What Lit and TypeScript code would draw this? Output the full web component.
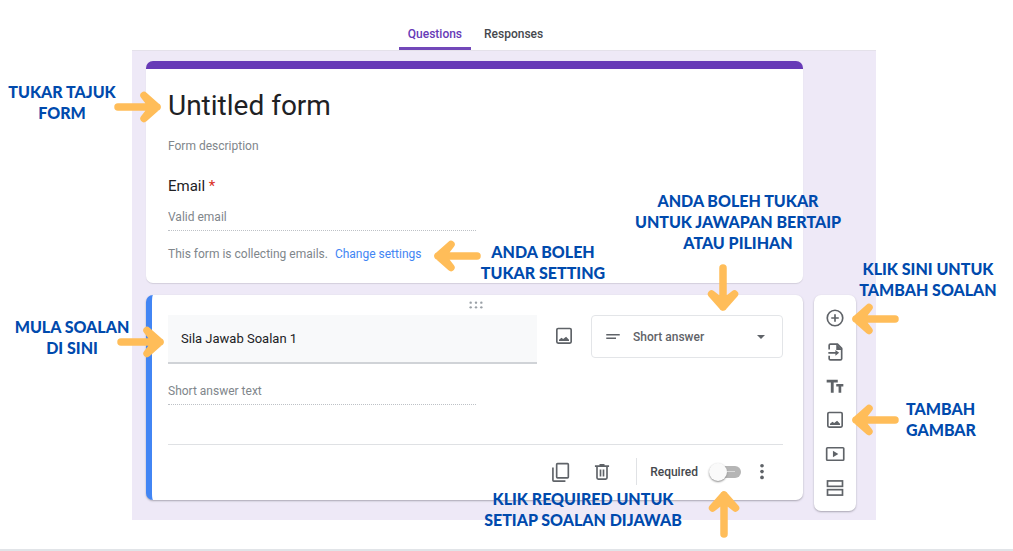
import { LitElement, html, css, svg } from "lit";
import { customElement, property, state } from "lit/decorators.js";
import { classMap } from "lit/directives/class-map.js";

const icons: Record<string, unknown> = {
  add: svg`<circle cx="12" cy="12" r="9.300"/><path d="M12 7.500v9M7.500 12h9"/>`,
  importing: svg`<path d="M5 9V4a1.500 1.500 0 0 1 1.500-1.500H15l5 5V20a1.500 1.500 0 0 1-1.500 1.500h-12A1.500 1.500 0 0 1 5 20v-3.500M4 13h9.500"/><path class="solid" d="M13.500 2l7.500 7.500h-7.500zM12.500 9.500L17 13l-4.500 3.500z"/>`,
  text: svg`<path class="solid" d="M2 4.500v3.200h5V20h3.400V7.700h4.900V4.500zM22 9.500h-8.500v3h2.800V20h3.200v-7.500H22z"/>`,
  image: svg`<rect x="3.400" y="3" width="17.200" height="17.500" rx="1.500"/><path class="solid" d="M6 18v-1.500l3-2.500 2 1.500 3.500-2.500 3.500 3.500V18z"/>`,
  video: svg`<rect x="2" y="4.500" width="20.500" height="15" rx="1"/><path class="solid" d="M9.500 8v8l6.500-4z"/>`,
  section: svg`<rect x="3" y="3.500" width="18" height="6.500"/><rect x="3" y="14" width="18" height="6.500"/>`,
  copy: svg`<rect x="8" y="2" width="14" height="17" rx="1"/><path d="M3.500 6.500V22a1 1 0 0 0 1 1h14"/>`,
  trash: svg`<path d="M3.500 5h17M9 3.500h6M6 5v14a1.500 1.500 0 0 0 1.500 1.500h9a1.500 1.500 0 0 0 1.500-1.500V5M10.200 9v8.500M13.800 9v8.500"/>`,
  more: svg`<circle class="solid" cx="12" cy="4.500" r="2.200"/><circle class="solid" cx="12" cy="11.500" r="2.200"/><circle class="solid" cx="12" cy="18.500" r="2.200"/>`,
  short: svg`<path d="M3 9h18M3 13.500h13"/>`,
  drag: svg`<g class="solid"><circle cx="4" cy="8.500" r="1.800"/><circle cx="12" cy="8.500" r="1.800"/><circle cx="20" cy="8.500" r="1.800"/><circle cx="4" cy="15.500" r="1.800"/><circle cx="12" cy="15.500" r="1.800"/><circle cx="20" cy="15.500" r="1.800"/></g>`,
};

@customElement("form-icon")
class FormIcon extends LitElement {
  @property() name = "";
  static styles = css`
    :host { display: block; width: 20px; height: 20px; color: #5f6368; }
    .glyph { display: block; width: 100%; height: 100%; fill: none; stroke: currentColor; stroke-width: 2; overflow: visible; }
    .solid { fill: currentColor; stroke: none; }
  `;
  render() {
    return html`<svg class="glyph" viewBox="0 0 24 24" aria-hidden="true">${icons[this.name]}</svg>`;
  }
}

@customElement("guide-arrow")
class GuideArrow extends LitElement {
  @property({ reflect: true }) dir = "right";
  static styles = css`
    :host { display: block; width: 48px; height: 32px; }
    :host([dir="up"]), :host([dir="down"]) { width: 32px; height: 48px; }
    .arrow { display: block; width: 100%; height: 100%; fill: #ffbd59; stroke: #ffbd59; stroke-width: 7.5; stroke-linecap: round; stroke-linejoin: round; }
  `;
  render() {
    const shapes: Record<string, [string, string]> = {
      right: ["0 0 48 32", "M4 16H43M30 4.500L43 16L30 27.500L39 16z"],
      left: ["0 0 48 32", "M44 16H5M18 4.500L5 16L18 27.500L9 16z"],
      down: ["0 0 32 48", "M16 4V43M4.500 30L16 43L27.500 30L16 39z"],
      up: ["0 0 32 48", "M16 44V5M4.500 18L16 5L27.500 18L16 9z"],
    };
    const [box, path] = shapes[this.dir];
    return html`<svg class="arrow" viewBox=${box} aria-hidden="true"><path d=${path}></path></svg>`;
  }
}

@customElement("app-root")
class AppRoot extends LitElement {
  @state() tab = "Questions";

  static styles = css`
    :host { display: block; font-family: Roboto, "Liberation Sans", sans-serif; font-size: 12px; color: #202124; background: #fff; }
    * { box-sizing: border-box; }
    button, input, select { font: inherit; color: inherit; border: 0; margin: 0; padding: 0; background: none; outline: none; border-radius: 0; }
    .guide { position: relative; padding: 0 137px 29px 132px; border-bottom: 2px solid #e1e4e8; }
    .tabs { display: flex; justify-content: center; gap: 4px; height: 51px; padding-right: 57px; border-bottom: 1px solid #e4e1ea; }
    .tab { display: flex; align-items: center; height: 50px; padding: 21px 9px 0; border-bottom: 3px solid transparent; font-weight: 500; color: #45484d; }
    .tab.active { color: #673ab7; border-bottom-color: #7248b9; border-radius: 2px 2px 0 0; }
    .canvas { display: grid; grid-template-columns: 1fr 42px; column-gap: 11px; row-gap: 12px; align-items: start; padding: 10px 20px 9px 14px; background: #eee9f7; }
    .card { background: #fff; border-radius: 7px; box-shadow: 0 1px 1px #d3cfdc; overflow: hidden; }
    .intro { display: flex; flex-direction: column; align-items: flex-start; border-top: 8px solid #673ab7; padding: 18px 20px 19px 22px; }
    .title { width: 100%; height: 36px; font-size: 28px; }
    .description { width: 100%; height: 20px; margin-top: 13px; }
    .muted, .muted::placeholder { color: #80868b; opacity: 1; }
    .label { margin-top: 20px; font-size: 15px; line-height: 20px; }
    .star { color: #d93025; }
    .line { width: 50%; height: 24px; padding-bottom: 3px; border-bottom: 1px dotted #bdc1c6; }
    .email { margin-top: 11px; }
    .info { margin: 13px 0 0; line-height: 20px; color: #80868b; }
    .link { color: #4285f4; text-decoration: none; margin-left: 4px; }
    .question { grid-column: 1; border-left: 6px solid #4285f4; padding: 0 20px 0 16px; box-shadow: 0 1px 2px #a9a6b2; }
    .drag { display: flex; justify-content: center; align-items: center; height: 20px; }
    .drag form-icon { width: 16px; height: 16px; color: #9aa0a6; }
    .row { display: flex; align-items: flex-start; }
    .prompt { flex: 1; min-width: 0; height: 49px; padding: 0 13px; background: #f8f9fa; border-bottom: 2px solid #d0d3d7; font-size: 13px; }
    .icon-button { display: grid; place-items: center; width: 42px; height: 34px; cursor: pointer; }
    .row .icon-button { width: 54px; height: 42px; }
    .kind { position: relative; display: flex; align-items: center; width: 192px; height: 43px; border: 1px solid #e3e5e8; border-radius: 4px; }
    .kind form-icon { position: absolute; left: 12px; width: 18px; height: 18px; pointer-events: none; }
    .kind::after { content: ""; position: absolute; right: 17px; border: 4px solid transparent; border-top-color: #5f6368; border-bottom: 0; pointer-events: none; }
    .select { appearance: none; width: 100%; height: 41px; padding-left: 41px; font-weight: 500; color: #5f6368; }
    .answer { margin-top: 17px; display: block; }
    .actions { display: flex; justify-content: flex-end; align-items: center; height: 56px; margin-top: 39px; padding-bottom: 2px; border-top: 1px solid #dfe1e4; }
    .required { display: flex; align-items: center; gap: 11px; height: 27px; margin-left: 13px; padding-left: 13px; border-left: 1px solid #e0e2e5; color: #45484d; font-weight: 500; }
    .toggle { appearance: none; display: flex; align-items: center; width: 32px; height: 12px; border-radius: 6px; background: #b5b5b5; }
    .toggle::before { content: ""; width: 18px; height: 18px; flex: none; border-radius: 50%; background: #fafafa; box-shadow: 0 1px 2px #8a8a8a; }
    .toggle::after { content: ""; width: 8px; height: 1px; background: #dadada; }
    .toggle:checked { flex-direction: row-reverse; background: #b39ddb; }
    .toolbar { display: flex; flex-direction: column; padding: 6px 0; background: #fff; border-radius: 7px; box-shadow: 0 1px 2px #a9a6b2; }
    .note { position: absolute; margin: 0; color: #004aad; font: 900 16px/21px Lato, "Open Sans", sans-serif; text-align: center; white-space: pre; }
    .pointer { position: absolute; pointer-events: none; }
    .n-title { top: 81px; left: 7px; width: 110px; }
    .n-start { top: 316px; left: 12px; width: 120px; }
    .n-setting { top: 241px; left: 473px; width: 140px; }
    .n-kind { top: 190px; right: 165px; width: 220px; }
    .n-required { top: 488px; right: 320px; width: 220px; }
    .n-add { top: 258px; right: 10px; width: 150px; }
    .n-image { top: 398px; right: 27px; width: 80px; text-align: left; }
    .p-title { top: 91px; left: 114px; }
    .p-start { top: 326px; left: 117px; }
    .p-setting { top: 240px; left: 433px; }
    .p-kind { top: 264px; right: 274px; }
    .p-required { top: 490px; right: 273px; }
    .p-add { top: 303px; right: 114px; }
    .p-image { top: 404px; right: 114px; }
  `;

  private iconButton(name: string, label: string) {
    return html`<button class="icon-button" type="button" aria-label=${label}><form-icon name=${name}></form-icon></button>`;
  }

  private note(key: string, text: string, dir: string) {
    return html`<p class="note n-${key}">${text}</p><guide-arrow class="pointer p-${key}" dir=${dir}></guide-arrow>`;
  }

  render() {
    return html`
      <main class="guide">
        <nav class="tabs">
          ${["Questions", "Responses"].map(
            (t) => html`<button type="button" class=${classMap({ tab: true, active: this.tab === t })} @click=${() => (this.tab = t)}>${t}</button>`
          )}
        </nav>
        <div class="canvas">
          <section class="card intro">
            <input class="title" aria-label="Form title" value="Untitled form" />
            <input class="description muted" aria-label="Form description" placeholder="Form description" />
            <label class="label" for="email">Email <span class="star">*</span></label>
            <input class="line email muted" id="email" type="email" placeholder="Valid email" />
            <p class="info">This form is collecting emails. <a class="link" href="#settings">Change settings</a></p>
          </section>
          <section class="card question">
            <div class="drag"><form-icon name="drag"></form-icon></div>
            <div class="row">
              <input class="prompt" aria-label="Question" value="Sila Jawab Soalan 1" />
              ${this.iconButton("image", "Add image to question")}
              <div class="kind">
                <form-icon name="short"></form-icon>
                <select class="select" aria-label="Question type"><option>Short answer</option></select>
              </div>
            </div>
            <input class="line answer muted" aria-label="Answer" placeholder="Short answer text" />
            <div class="actions">
              ${this.iconButton("copy", "Duplicate")}
              ${this.iconButton("trash", "Delete")}
              <label class="required">Required <input class="toggle" type="checkbox" role="switch" /></label>
              ${this.iconButton("more", "More options")}
            </div>
          </section>
          <div class="toolbar" role="toolbar" aria-label="Add to form">
            ${this.iconButton("add", "Add question")}
            ${this.iconButton("importing", "Import questions")}
            ${this.iconButton("text", "Add title and description")}
            ${this.iconButton("image", "Add image")}
            ${this.iconButton("video", "Add video")}
            ${this.iconButton("section", "Add section")}
          </div>
        </div>
        ${this.note("title", "TUKAR TAJUK\nFORM", "right")}
        ${this.note("start", "MULA SOALAN\nDI SINI", "right")}
        ${this.note("setting", "ANDA BOLEH\nTUKAR SETTING", "left")}
        ${this.note("kind", "ANDA BOLEH TUKAR\nUNTUK JAWAPAN BERTAIP\nATAU PILIHAN", "down")}
        ${this.note("add", "KLIK SINI UNTUK\nTAMBAH SOALAN", "left")}
        ${this.note("image", "TAMBAH\nGAMBAR", "left")}
        ${this.note("required", "KLIK REQUIRED UNTUK\nSETIAP SOALAN DIJAWAB", "up")}
      </main>
    `;
  }
}
